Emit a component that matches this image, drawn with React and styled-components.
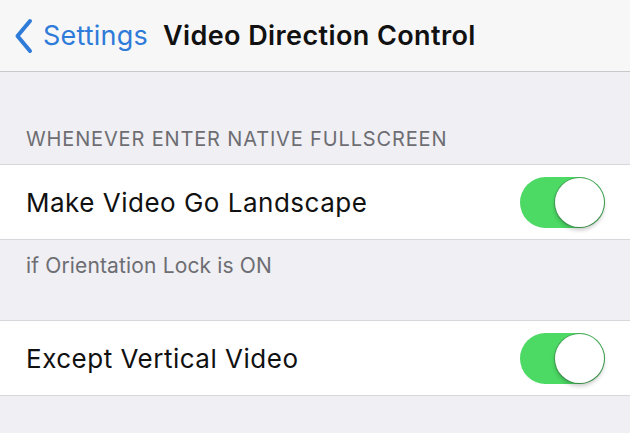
import React from "react";
import styled, { createGlobalStyle } from "styled-components";

const Global = createGlobalStyle`
  html, body { margin: 0; padding: 0; }
  body {
    background: #efeff4;
    font-family: "Inter", "Liberation Sans", sans-serif;
    -webkit-font-smoothing: antialiased;
  }
`;

const Page = styled.div`
  width: 630px;
  height: 433px;
  overflow: hidden;
  background: #efeff4;
  display: flex;
  flex-direction: column;
`;

const NavBar = styled.header`
  height: 72px;
  box-sizing: border-box;
  background: #f7f7f8;
  border-bottom: 1px solid #c8c7cc;
  display: flex;
  align-items: center;
  padding: 0 0 0 14px;
`;

const Back = styled.div`
  display: flex;
  align-items: center;
  gap: 10px;
  color: #2f7bd9;
  font-size: 27px;
  letter-spacing: 0.2px;
`;

const Title = styled.div`
  margin-left: 15px;
  font-size: 27px;
  font-weight: 600;
  color: #111;
  letter-spacing: 0.4px;
`;

const SectionHeader = styled.div`
  padding: ${(p) => p.$top}px 26px 0;
  height: ${(p) => p.$height}px;
  box-sizing: border-box;
  color: #6d6d72;
  font-size: ${(p) => p.$size}px;
  letter-spacing: ${(p) => p.$spacing}px;
`;

const Row = styled.div`
  height: 76px;
  box-sizing: border-box;
  background: #fff;
  border-top: 1px solid #d8d8dc;
  border-bottom: 1px solid #d8d8dc;
  display: flex;
  align-items: center;
  justify-content: space-between;
  padding: 0 25px 0 26px;
`;

const Label = styled.div`
  font-size: 26px;
  color: #111;
  letter-spacing: 0.5px;
`;

const Track = styled.div`
  width: 85px;
  height: 51px;
  border-radius: 26px;
  background: #4cd964;
  position: relative;
`;

const Knob = styled.div`
  position: absolute;
  top: 1px;
  right: 1px;
  width: 49px;
  height: 49px;
  border-radius: 50%;
  background: #fff;
  box-shadow: 0 3px 4px rgba(0, 0, 0, 0.22), 0 0 0 1px rgba(60, 110, 70, 0.45);
`;

const Toggle = () => (
  <Track>
    <Knob />
  </Track>
);

export default function App() {
  return (
    <>
      <Global />
      <Page>
        <NavBar>
          <Back>
            <svg width="19" height="36" viewBox="0 0 19 36">
              <path
                d="M16 3 L3.5 18 L16 33"
                fill="none"
                stroke="#2f7bd9"
                strokeWidth="4"
                strokeLinecap="round"
                strokeLinejoin="round"
              />
            </svg>
            <span>Settings</span>
          </Back>
          <Title>Video Direction Control</Title>
        </NavBar>
        <SectionHeader $top={55} $height={92} $size={20} $spacing={0.85}>
          WHENEVER ENTER NATIVE FULLSCREEN
        </SectionHeader>
        <Row>
          <Label>Make Video Go Landscape</Label>
          <Toggle />
        </Row>
        <SectionHeader $top={13} $height={80} $size={21} $spacing={0.15}>
          if Orientation Lock is ON
        </SectionHeader>
        <Row>
          <Label>Except Vertical Video</Label>
          <Toggle />
        </Row>
      </Page>
    </>
  );
}
